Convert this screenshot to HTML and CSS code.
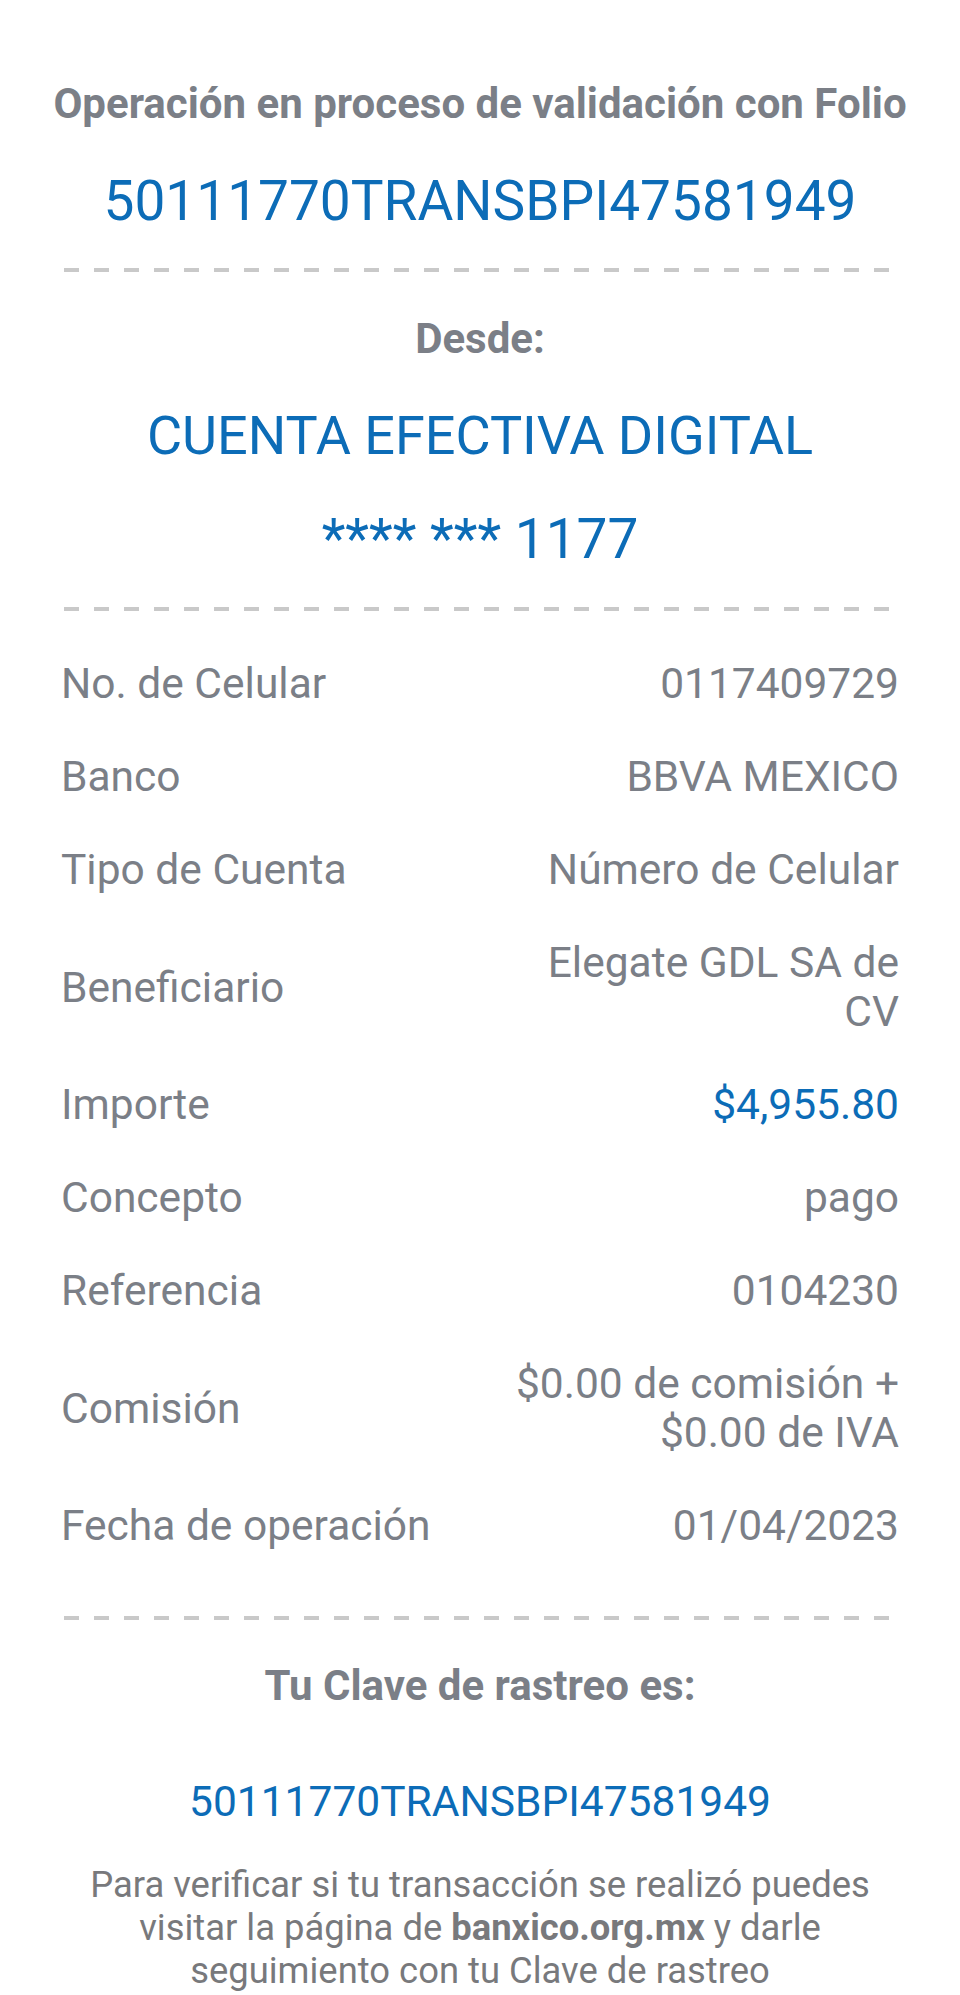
FILE: index.html
```html
<!DOCTYPE html>
<html lang="es">
  <head>
    <meta charset="UTF-8" />
    <meta name="viewport" content="width=device-width, initial-scale=1.0" />
    <title>Comprobante</title>
    <link rel="stylesheet" href="styles.css">
  </head>
  <body>
    <div id="receipt">
      <div class="head">
        <h2 class="title">Operación en proceso de validación con Folio</h2>
        <div class="folio">50111770TRANSBPI47581949</div>
      </div>

      <div class="dashes"></div>

      <div class="origin">
        <h3 class="label-bold">Desde:</h3>
        <div class="account">CUENTA EFECTIVA DIGITAL</div>
        <div class="account-num">**** *** 1177</div>
      </div>

      <div class="dashes"></div>

      <div class="details">
        <div class="row">
          <div class="key">No. de Celular</div>
          <div class="val">0117409729</div>
        </div>
        <div class="row">
          <div class="key">Banco</div>
          <div class="val">BBVA MEXICO</div>
        </div>
        <div class="row">
          <div class="key">Tipo de Cuenta</div>
          <div class="val">Número de Celular</div>
        </div>
        <div class="row">
          <div class="key">Beneficiario</div>
          <div class="val">Elegate GDL SA de CV</div>
        </div>
        <div class="row">
          <div class="key">Importe</div>
          <div class="val amount">$4,955.80</div>
        </div>
        <div class="row">
          <div class="key">Concepto</div>
          <div class="val">pago</div>
        </div>
        <div class="row">
          <div class="key">Referencia</div>
          <div class="val">0104230</div>
        </div>
        <div class="row">
          <div class="key">Comisión</div>
          <div class="val">$0.00 de comisión + $0.00 de IVA</div>
        </div>
        <div class="row">
          <div class="key">Fecha de operación</div>
          <div class="val">01/04/2023</div>
        </div>
      </div>

      <div class="dashes last"></div>

      <div class="tracking">
        <h3 class="label-bold">Tu Clave de rastreo es:</h3>
        <div class="tracking-key">50111770TRANSBPI47581949</div>
        <p class="note">
          Para verificar si tu transacción se realizó puedes
          visitar la página de <b>banxico.org.mx</b> y darle
          seguimiento con tu Clave de rastreo
        </p>
      </div>
    </div>
  </body>
</html>
```

FILE: styles.css
```css
body {
  margin: 0;
  padding: 0;
  background: #ffffff;
  font-family: Roboto, "Noto Sans", sans-serif;
  color: #7b7f87;
}

#receipt {
  padding: 76px 61px 0;
  text-align: center;
}

h2,
h3,
p {
  margin: 0;
}

.title {
  margin: 0 -20px;
  font-size: 42px;
  font-weight: 700;
  line-height: 56px;
  white-space: nowrap;
}

.folio {
  margin-top: 37px;
  font-size: 55px;
  line-height: 64px;
  color: #0c6cb7;
}

.dashes {
  height: 4px;
  margin: 35px 0 0 3px;
  width: 830px;
  background: repeating-linear-gradient(
    to right,
    #c9c9c9 0,
    #c9c9c9 15px,
    transparent 15px,
    transparent 30px
  );
}

.origin .label-bold {
  margin-top: 41px;
}

.label-bold {
  font-size: 42px;
  font-weight: 700;
  line-height: 52px;
}

.account {
  margin-top: 39px;
  font-size: 54px;
  line-height: 64px;
  color: #0c6cb7;
}

.account-num {
  margin-top: 39px;
  font-size: 55px;
  line-height: 64px;
  color: #0c6cb7;
}

.origin + .dashes {
  margin-top: 36px;
}

.details {
  margin-top: 26px;
}

.row {
  display: flex;
  align-items: center;
  justify-content: space-between;
  padding: 22px 0;
  font-size: 42.5px;
  line-height: 49px;
  text-align: left;
}

.key {
  flex: 1;
}

.val {
  max-width: 400px;
  text-align: right;
}

.amount {
  color: #0c6cb7;
}

.dashes.last {
  margin-top: 44px;
}

.tracking .label-bold {
  margin-top: 40px;
}

.tracking-key {
  margin-top: 64px;
  font-size: 42.5px;
  line-height: 52px;
  color: #0c6cb7;
}

.note {
  margin-top: 35px;
  font-size: 36.4px;
  line-height: 43px;
  color: #78797c;
}

.note b {
  font-weight: 700;
}
```
